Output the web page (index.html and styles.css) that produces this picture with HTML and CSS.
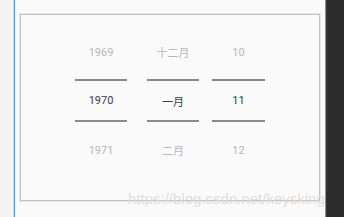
FILE: index.html
```html
<!DOCTYPE html>
<html>
<head>
<meta charset="utf-8">
<link rel="stylesheet" href="styles.css">
</head>
<body>
<div class="screen">
  <div class="left-strip"></div>
  <div class="edge"></div>
  <div class="main">
    <div class="picker">
      <div class="col col-year">
        <div class="cell faded">1969</div>
        <div class="line"></div>
        <div class="cell sel">1970</div>
        <div class="line"></div>
        <div class="cell faded bottom">1971</div>
      </div>
      <div class="col col-month">
        <div class="cell faded">十二月</div>
        <div class="line"></div>
        <div class="cell sel">一月</div>
        <div class="line"></div>
        <div class="cell faded bottom">二月</div>
      </div>
      <div class="col col-day">
        <div class="cell faded">10</div>
        <div class="line"></div>
        <div class="cell sel">11</div>
        <div class="line"></div>
        <div class="cell faded bottom">12</div>
      </div>
    </div>
  </div>
  <div class="edge"></div>
  <div class="dark"></div>
  <div class="watermark">https://blog.csdn.net/keysking</div>
</div>
</body>
</html>
```
FILE: styles.css
```css
html, body {
  margin: 0;
  padding: 0;
}
body {
  width: 344px;
  height: 217px;
  overflow: hidden;
  font-family: Roboto, "Noto Sans CJK SC", sans-serif;
}
.screen {
  position: relative;
  display: flex;
  width: 344px;
  height: 217px;
}
.left-strip {
  width: 13px;
  background: #f3f3f3;
  border-right: 1px solid #d6d6d6;
}
.edge {
  width: 1px;
  background: #4f9be4;
}
.main {
  flex: 1;
  background: #fafafa;
  padding: 14px 5px 0 5px;
}
.picker {
  height: 172px;
  border: 1px solid #c4c4c4;
  box-shadow: 0 0 0 1px #e6e6e6;
  display: flex;
  padding-left: 54px;
  padding-top: 13px;
  box-sizing: content-box;
}
.col {
  display: flex;
  flex-direction: column;
  width: 52px;
}
.col-month {
  margin-left: 20px;
}
.col-day {
  margin-left: 13px;
  width: 53px;
}
.cell {
  height: 48px;
  display: flex;
  align-items: center;
  justify-content: center;
  font-size: 11px;
}
.faded {
  color: #b8b8b8;
}
.sel {
  height: 39px;
  color: #3c3c3c;
}
.line {
  height: 2px;
  background: #8a8a8a;
  margin-top: 3px;
}
.sel + .line {
  margin-top: 0;
}
.bottom {
  margin-top: 4px;
}
.dark {
  width: 17px;
  background: #2b2b2b;
  border-left: 1px solid #3a3a3a;
}
.watermark {
  position: absolute;
  left: 128px;
  top: 190px;
  font-family: "Liberation Sans", Arial, sans-serif;
  font-size: 15px;
  color: rgba(218, 218, 218, 0.9);
  white-space: nowrap;
}
```
